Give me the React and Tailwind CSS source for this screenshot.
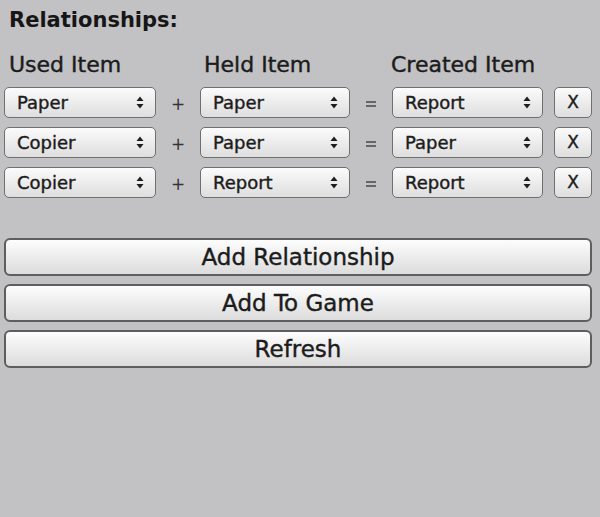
import React from "react";

const font = { fontFamily: '"DejaVu Sans", "Lucida Grande", sans-serif' };

const rows = [
  ["Paper", "Paper", "Report"],
  ["Copier", "Paper", "Paper"],
  ["Copier", "Report", "Report"],
];

function Arrows() {
  return (
    <svg width="8" height="13" viewBox="0 0 8 13" className="shrink-0">
      <path d="M4 0.5 L7.5 5 L0.5 5 Z" fill="#1e1e1e" />
      <path d="M4 12.5 L7.5 8 L0.5 8 Z" fill="#1e1e1e" />
    </svg>
  );
}

function Dropdown({ value, w }) {
  return (
    <div
      className={`${w} h-[31px] shrink-0 flex items-center justify-between pl-[12px] pr-[11px] rounded-[5px] border-[1.5px] border-[#6f6f6f] bg-gradient-to-b from-[#fbfbfb] to-[#dedede]`}
    >
      <span className="text-[18px] text-[#1c1c1c] leading-none [-webkit-text-stroke:0.4px_#1c1c1c]">{value}</span>
      <Arrows />
    </div>
  );
}

function BigButton({ children }) {
  return (
    <button
      type="button"
      className="w-full h-[38px] rounded-[6px] border-2 border-[#5e5e5e] bg-gradient-to-b from-[#fdfdfd] to-[#dcdcdc] text-[23px] text-[#1c1c1c] leading-none [-webkit-text-stroke:0.4px_#1c1c1c]"
      style={font}
    >
      {children}
    </button>
  );
}

export default function App() {
  return (
    <div className="w-[600px] h-[517px] bg-[#c2c1c4] overflow-hidden" style={font}>
      <div className="pl-[9px] pt-[7px] text-[21px] font-bold text-[#161616] leading-[26px]">
        Relationships:
      </div>

      <div className="flex mt-[19px] text-[22px] text-[#1c1c1c] leading-[26px] [-webkit-text-stroke:0.4px_#1c1c1c]">
        <div className="w-[204px] pl-[9px]">Used Item</div>
        <div className="w-[187px]">Held Item</div>
        <div>Created Item</div>
      </div>

      <div className="mt-[9px] flex flex-col gap-[9px] pl-[4px]">
        {rows.map((r, i) => (
          <div key={i} className="flex items-center">
            <Dropdown value={r[0]} w="w-[152px]" />
            <div className="w-[44px] text-center text-[17px] text-[#333] pt-[4px]">+</div>
            <Dropdown value={r[1]} w="w-[150px]" />
            <div className="w-[42px] flex justify-center pt-[3px]">
              <div className="w-[10px] h-[6px] border-y-2 border-[#666]" />
            </div>
            <Dropdown value={r[2]} w="w-[151px]" />
            <div className="w-[11px]" />
            <button
              type="button"
              className="w-[38px] h-[31px] shrink-0 rounded-[5px] border-[1.5px] border-[#6f6f6f] bg-gradient-to-b from-[#fbfbfb] to-[#dedede] text-[17px] text-[#1c1c1c] leading-none [-webkit-text-stroke:0.4px_#1c1c1c]"
              style={font}
            >
              X
            </button>
          </div>
        ))}
      </div>

      <div className="mt-[40px] px-[4px] w-[596px] flex flex-col gap-[8px]">
        <BigButton>Add Relationship</BigButton>
        <BigButton>Add To Game</BigButton>
        <BigButton>Refresh</BigButton>
      </div>
    </div>
  );
}
